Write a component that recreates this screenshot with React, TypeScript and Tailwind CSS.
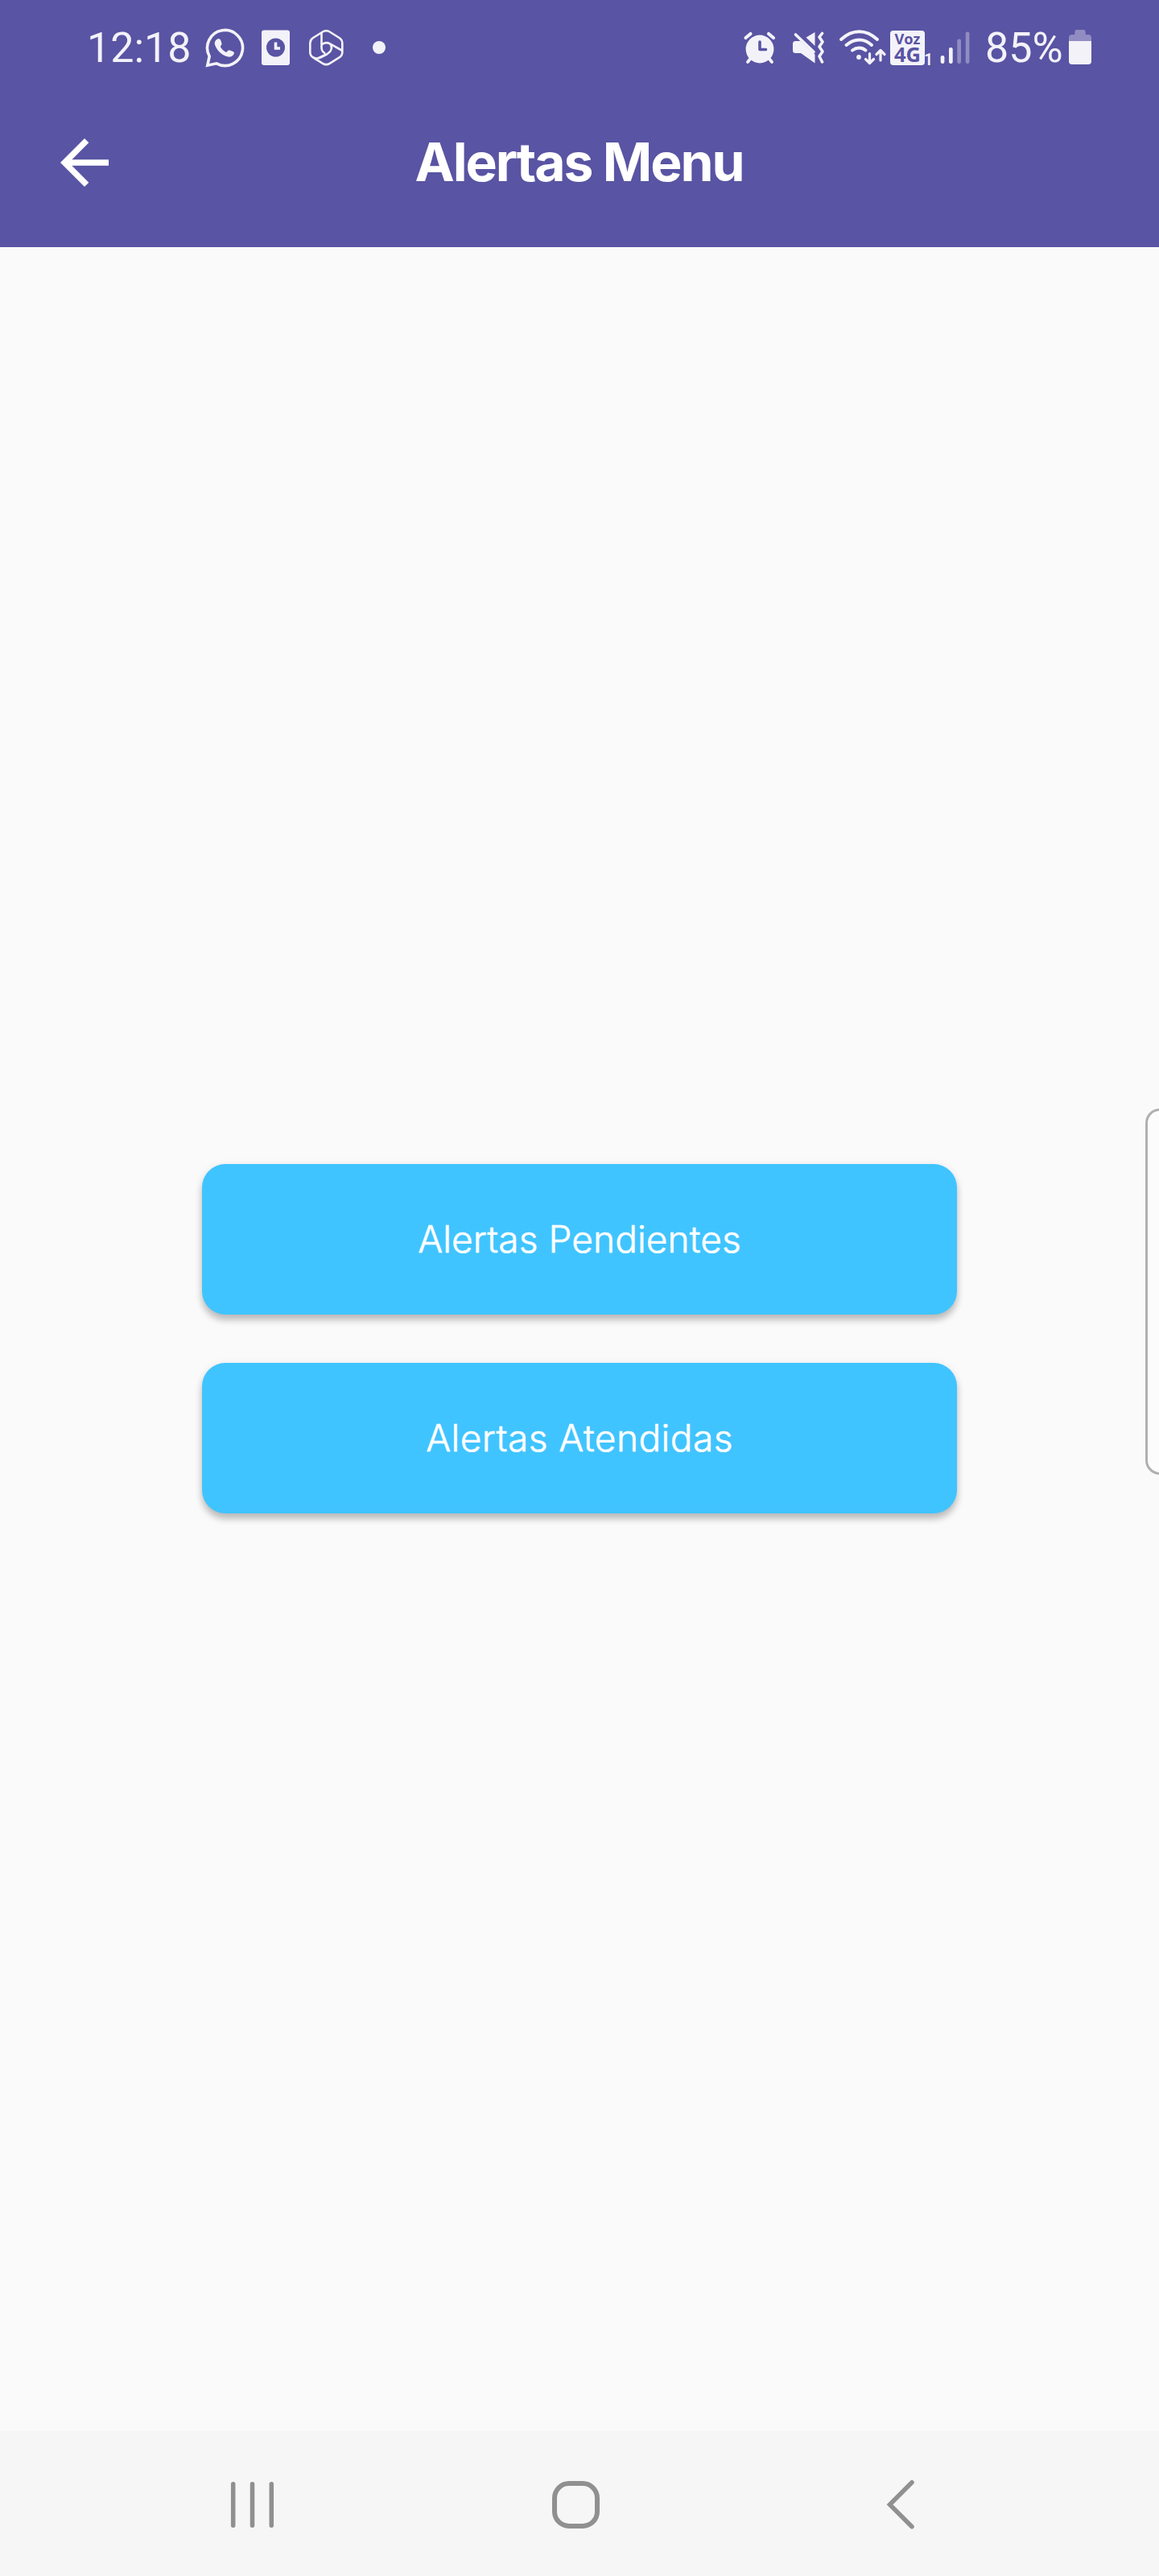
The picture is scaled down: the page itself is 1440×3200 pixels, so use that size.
const ink = "#f3f2f9";
const purple = "#5954a3";

function StatusBar() {
  return (
    <div className="flex h-[120px] items-start pt-[30px] text-[#f3f2f9]">
      <span className="ml-[108px] w-[140px] whitespace-nowrap font-[Roboto,sans-serif] text-[52px] leading-[59px]">12:18</span>

      {/* chat */}
      <svg className="shrink-0" width="60" height="60" viewBox="248 30 60 60" fill="none">
        <path d="M260.200 70 A22 22 0 1 1 269 78.800 L257.800 81.200 Z" stroke={ink} strokeWidth="3.6" strokeLinejoin="miter" />
        <path d="M268.5 49.5 q3.5 -3 5.5 0 l1.5 4.5 q.3 1.500 -1.800 3.700 q2.600 5.200 7.600 7.300 q2 -3 3.700 -2.700 l5 2 q2 1.500 -.5 4.500 q-3.500 3.300 -9.500 .8 q-8 -3.600 -11.500 -10.600 q-3.500 -6 0 -9.500z" fill={ink} />
      </svg>

      {/* scheduled document */}
      <svg className="ml-[10px] shrink-0" width="50" height="60" viewBox="318 30 50 60" fill="none">
        <rect x="325" y="37.500" width="35" height="43.500" rx="3" fill={ink} />
        <circle cx="342.500" cy="59" r="11.500" fill={purple} />
        <path d="M342.500 52.500V60H348" stroke={ink} strokeWidth="3.600" />
      </svg>

      {/* hexagon swirl */}
      <svg className="ml-[10px] shrink-0" width="54" height="60" viewBox="378 30 54 60" fill="none" stroke={ink} strokeWidth="2.600" strokeLinejoin="round">
        <path d="M401 39.500Q405.300 37 409.600 39.500L421.500 47Q425.300 49.500 425.300 53.500V65Q425.300 69 421.500 71.300L409.600 78.800Q405.300 81.500 401 78.800L389 71.300Q385.300 69 385.300 65V53.500Q385.300 49.500 389 47Z" />
        <path d="M399.500 41V59.500Q399.800 64.500 404 66.200M399.500 55.500Q404.500 51.500 410 54.300L424.500 62.500M410 54.300Q413.500 58.500 410.500 63.500Q409 65.500 406 67.500L398 71.500Q394 73.500 389.500 71.500M406 67.200L391.500 74" />
      </svg>

      <span className="ml-[31px] mt-[21px] size-4 shrink-0 rounded-full bg-[#f3f2f9]" />

      {/* alarm */}
      <svg className="ml-[441px] shrink-0" width="50" height="60" viewBox="920 30 50 60" fill="none" strokeLinecap="round">
        <circle cx="944" cy="61" r="17.400" fill={ink} />
        <path d="M926.500 47L932.500 42M961 47L955 42" stroke={ink} strokeWidth="4.200" />
        <path d="M933 72L929 77M955 72L959 77" stroke={ink} strokeWidth="3.800" />
        <path d="M944 52V61.500H951.500" stroke={purple} strokeWidth="3.600" strokeLinejoin="round" />
      </svg>

      {/* muted, vibrating */}
      <svg className="ml-[10px] shrink-0" width="50" height="60" viewBox="980 30 50 60" fill="none">
        <path d="M1001.500 46.500L1012.500 40V57Z" fill={ink} />
        <path d="M988.500 51H994.500L1012.500 67.500V78.500L995 66H988.500Q985 66 985 62.500V54.500Q985 51 988.500 51Z" fill={ink} />
        <path d="M988.500 43L1011 64.500" stroke={ink} strokeWidth="3.600" strokeLinecap="round" />
        <path d="M1021.500 41.500L1018 46L1022 52L1018 58L1022 64L1018 70L1021.500 77" stroke={ink} strokeWidth="3.600" strokeLinecap="round" strokeLinejoin="round" />
      </svg>

      {/* wifi with traffic arrows */}
      <svg className="ml-[10px] shrink-0" width="64" height="60" viewBox="1040 30 64 60" fill="none" stroke={ink} strokeWidth="4" strokeLinecap="round" strokeLinejoin="round">
        <path d="M1045 49Q1055.500 39.200 1067.500 39.200T1090 49M1051.500 56Q1059 49.500 1067.500 49.500T1083 56M1059 62.500Q1063 59.500 1067.500 59.500T1075.500 62.500" />
        <circle cx="1067" cy="71" r="2.900" fill={ink} stroke="none" />
        <path d="M1080.500 66.500V78M1075.500 73.500L1080.500 78.500L1085.500 73.500M1094 75V63M1089 67.500L1094 62.500L1099 67.500" strokeWidth="3.200" />
      </svg>

      {/* Voz 4G */}
      <svg className="shrink-0" width="58" height="60" viewBox="1104 30 58 60">
        <rect x="1106" y="38" width="43" height="43" rx="4" fill={ink} />
        <g fill={purple} fontFamily="Open Sans, sans-serif" fontWeight="700">
          <text x="1111.500" y="55" fontSize="18.500" textLength="32" lengthAdjust="spacingAndGlyphs">Voz</text>
          <text x="1111" y="77" fontSize="24.500" textLength="33" lengthAdjust="spacingAndGlyphs">4G</text>
        </g>
        <text x="1148" y="80.500" fontSize="19.500" fontWeight="600" fontFamily="Roboto, sans-serif" fill={ink}>1</text>
      </svg>

      {/* signal */}
      <svg className="ml-[2px] shrink-0" width="46" height="60" viewBox="1164 30 46 60" fill={ink}>
        <rect x="1168.700" y="69" width="4.700" height="10" rx="2.200" />
        <rect x="1179" y="59" width="4.700" height="20" rx="2.200" />
        <rect x="1189.300" y="48.500" width="4.700" height="30.500" rx="2.200" opacity=".36" />
        <rect x="1199.700" y="39.500" width="4.700" height="39.500" rx="2.200" opacity=".36" />
      </svg>

      <span className="ml-[14px] w-[98px] shrink-0 whitespace-nowrap font-[Roboto,sans-serif] text-[52px] leading-[59px]">85%</span>

      {/* battery */}
      <svg className="ml-[2px] shrink-0" width="36" height="60" viewBox="1324 30 36 60" fill={ink}>
        <path d="M1328 51V47Q1328 43 1332 43H1335.300V40Q1335.300 37 1338 37H1346Q1348.700 37 1348.700 40V43H1352Q1356 43 1356 47V51Z" opacity=".36" />
        <path d="M1328 51H1356V76Q1356 80 1352 80H1332Q1328 80 1328 76Z" />
      </svg>
    </div>
  );
}

function MenuButton({ children, spacing }: { children: string; spacing: string }) {
  return (
    <button
      type="button"
      className={
        "flex h-[187px] w-[938px] items-center justify-center rounded-[29px] bg-[#40c4ff] pb-[1px] font-[Inter,sans-serif] text-[46px] font-light text-white shadow-[0_7px_9px_rgba(0,0,0,0.22),0_2px_12px_rgba(0,0,0,0.08)] [-webkit-text-stroke:0.6px_white] " +
        spacing
      }
    >
      {children}
    </button>
  );
}

export default function App() {
  return (
    <div className="relative flex h-[3200px] w-[1440px] flex-col overflow-hidden bg-[#fafafa]">
      <header className="h-[307px] shrink-0 bg-[#5954a3]">
        <StatusBar />
        <div className="flex h-[164px] items-center">
          <svg className="ml-[60px] shrink-0" width="90" height="90" viewBox="0 0 24 24" fill="white">
            <path d="M20 11H7.830l5.590-5.590L12 4l-8 8 8 8 1.410-1.410L7.830 13H20v-2z" />
          </svg>
          <h1 className="mr-[151px] flex-1 whitespace-nowrap pb-[3px] text-center font-[Inter,sans-serif] text-[66px] font-bold leading-none tracking-[-2.100px] text-white">
            Alertas Menu
          </h1>
        </div>
      </header>

      <main className="flex flex-1 flex-col items-center gap-[60px] pt-[1139px]">
        <MenuButton spacing="tracking-[0.100px]">Alertas Pendientes</MenuButton>
        <MenuButton spacing="tracking-[0.450px]">Alertas Atendidas</MenuButton>
      </main>

      <div className="absolute left-[1423px] top-[1377px] h-[455px] w-[40px] rounded-[18px] border-[3px] border-[#b0b0b0] bg-[#fcfcfc]" />

      <nav className="flex h-[180px] shrink-0 items-center bg-[#f6f6f6]">
        <svg className="ml-[280px] shrink-0" width="68" height="68" viewBox="280 3076 68 68" stroke="#909090" strokeWidth="5.500" strokeLinecap="round">
          <path d="M289.700 3085.800V3137.200M313.500 3085.800V3137.200M337.300 3085.800V3137.200" />
        </svg>
        <span className="ml-[338px] mt-[3px] size-[59px] shrink-0 rounded-[21px] border-[6px] border-[#909090]" />
        <svg className="ml-[350px] shrink-0" width="50" height="68" viewBox="1095 3076 50 68" fill="none" stroke="#909090" strokeWidth="5.500" strokeLinecap="round">
          <path d="M1133 3083.700L1105.500 3111.200L1133 3138.700" />
        </svg>
      </nav>
    </div>
  );
}
